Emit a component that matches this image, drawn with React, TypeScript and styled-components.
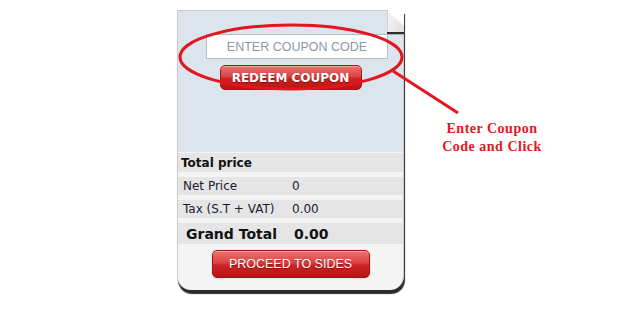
import styled, { createGlobalStyle } from "styled-components";

const GlobalStyle = createGlobalStyle`
  html, body { margin: 0; padding: 0; background: #fff; }
  body { font-family: "DejaVu Sans", Verdana, sans-serif; }
`;

const Page = styled.div`
  position: relative;
  display: flex;
  align-items: flex-start;
  height: 316px;
  padding: 10px 0 0 177px;
  box-sizing: border-box;
  overflow: hidden;
`;

const Panel = styled.div`
  position: relative;
  width: 227px;
  box-sizing: border-box;
  border: 1px solid #cacaca;
  border-bottom: none;
  background: #f4f4f4;
  border-radius: 0 0 14px 14px;
  box-shadow: 1px 4px 1px #2b2b2b;
`;

const CouponArea = styled.div`
  display: flex;
  flex-direction: column;
  height: 141px;
  padding-top: 23px;
  box-sizing: border-box;
  background: #dce5ed;
`;

const CouponInput = styled.input`
  width: 182px;
  height: 25px;
  margin-left: 28px;
  box-sizing: border-box;
  border: 1px solid #b9bcc0;
  background: #fff;
  padding: 0;
  text-align: center;
  font-family: "Liberation Sans", Arial, sans-serif;
  font-size: 12.5px;
  outline: none;
  &::placeholder { color: #8e98a2; }
`;

const RedButton = styled.button<{ $w: number; $h: number; $bold?: boolean }>`
  align-self: center;
  width: ${(p) => p.$w}px;
  height: ${(p) => p.$h}px;
  border: 1px solid #a11616;
  border-radius: 5px;
  box-shadow: 0 0 0 1px #e4e4e4, inset 0 1px 0 rgba(255, 255, 255, 0.35);
  background: linear-gradient(#ea7272 0%, #dc4444 45%, #cc2323 55%, #b81515 100%);
  color: #fff;
  font-family: ${(p) => (p.$bold ? `"DejaVu Sans", Verdana, sans-serif` : `"Liberation Sans", Arial, sans-serif`)};
  font-weight: ${(p) => (p.$bold ? 700 : 400)};
  font-size: ${(p) => (p.$bold ? 12 : 12.5)}px;
  text-shadow: 0 1px 1px rgba(90, 0, 0, 0.6);
  padding: 0;
  cursor: pointer;
`;

const Rows = styled.div`
  display: flex;
  flex-direction: column;
  gap: 5px;
  margin-top: 1px;
`;

const Row = styled.div<{ $h: number; $pad: number }>`
  display: flex;
  align-items: center;
  height: ${(p) => p.$h}px;
  padding-left: ${(p) => p.$pad}px;
  background: #e5e5e5;
  color: #1c1a33;
  font-size: 12px;
`;

const Label = styled.span<{ $w?: number; $big?: boolean; $bold?: boolean }>`
  width: ${(p) => (p.$w ? `${p.$w}px` : "auto")};
  font-weight: ${(p) => (p.$bold || p.$big ? 700 : 400)};
  font-size: ${(p) => (p.$big ? 14 : 12)}px;
  color: ${(p) => (p.$big || p.$bold ? "#111" : "#1c1a33")};
  white-space: nowrap;
`;

const Footer = styled.div`
  display: flex;
  justify-content: center;
  padding: 6px 0 12px;
`;

const Curl = styled.svg`
  position: absolute;
  top: -1px;
  right: -1px;
`;

const Overlay = styled.svg`
  position: absolute;
  left: 0;
  top: 0;
  pointer-events: none;
`;

const Note = styled.div`
  width: 110px;
  margin: 110px 0 0 33px;
  text-align: center;
  font-family: "Liberation Serif", "Times New Roman", serif;
  font-weight: 700;
  font-size: 14px;
  line-height: 18px;
  letter-spacing: 0.5px;
  color: #e4171f;
`;

export default function App() {
  return (
    <>
      <GlobalStyle />
      <Page>
        <Panel>
          <Curl width="17" height="25" viewBox="0 0 17 25">
            <defs>
              <linearGradient id="flap" x1="0" y1="0" x2="1" y2="1">
                <stop offset="0" stopColor="#fafafa" />
                <stop offset="1" stopColor="#dcdcdc" />
              </linearGradient>
            </defs>
            <polygon points="0,0 17,0 17,24 0,24" fill="#fff" />
            <polygon points="0,0 17,16 17,24 0,24" fill="url(#flap)" />
            <line x1="0.5" y1="0" x2="0.5" y2="23" stroke="#d0d0d0" />
            <rect x="0" y="22" width="17" height="2" fill="#2e2e2e" />
            <line x1="0" y1="24.5" x2="17" y2="24.5" stroke="#a8b0b8" />
          </Curl>
          <CouponArea>
            <CouponInput placeholder="ENTER COUPON CODE" />
            <RedButton $w={142} $h={25} $bold style={{ marginTop: 6 }}>
              REDEEM COUPON
            </RedButton>
          </CouponArea>
          <Rows>
            <Row $h={19} $pad={3}>
              <Label $bold>Total price</Label>
            </Row>
            <Row $h={18} $pad={5}>
              <Label $w={109}>Net Price</Label>
              <Label>0</Label>
            </Row>
            <Row $h={18} $pad={5}>
              <Label $w={109}>Tax (S.T + VAT)</Label>
              <Label>0.00</Label>
            </Row>
            <Row $h={21} $pad={8}>
              <Label $w={108} $big>Grand Total</Label>
              <Label $big>0.00</Label>
            </Row>
          </Rows>
          <Footer>
            <RedButton $w={158} $h={28}>PROCEED TO SIDES</RedButton>
          </Footer>
        </Panel>
        <Note>
          Enter Coupon
          <br />
          Code and Click
        </Note>
        <Overlay width="620" height="316" viewBox="0 0 620 316">
          <ellipse cx="291" cy="57" rx="111" ry="32" fill="none" stroke="#e3151f" strokeWidth="3" />
          <line x1="393" y1="71" x2="458" y2="113" stroke="#e3151f" strokeWidth="3" />
        </Overlay>
      </Page>
    </>
  );
}
